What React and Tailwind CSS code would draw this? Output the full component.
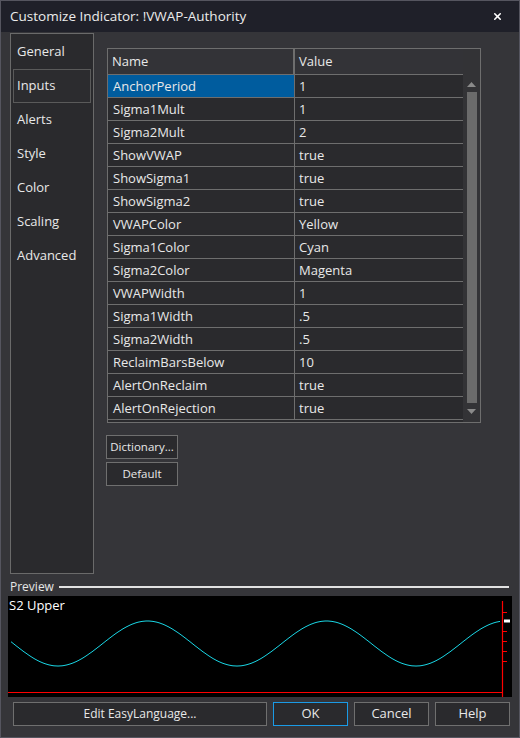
import { X } from "lucide-react";

const rows = [
  ["AnchorPeriod", "1"],
  ["Sigma1Mult", "1"],
  ["Sigma2Mult", "2"],
  ["ShowVWAP", "true"],
  ["ShowSigma1", "true"],
  ["ShowSigma2", "true"],
  ["VWAPColor", "Yellow"],
  ["Sigma1Color", "Cyan"],
  ["Sigma2Color", "Magenta"],
  ["VWAPWidth", "1"],
  ["Sigma1Width", ".5"],
  ["Sigma2Width", ".5"],
  ["ReclaimBarsBelow", "10"],
  ["AlertOnReclaim", "true"],
  ["AlertOnRejection", "true"],
];

const tabs = ["General", "Inputs", "Alerts", "Style", "Color", "Scaling", "Advanced"];

// sine wave for the preview chart, local coords of a 504x101 box
const wave = (() => {
  const pts = [];
  for (let x = 3; x <= 492; x++) {
    const X = x + 8;
    const y = 47.5 + 22.5 * Math.cos((2 * Math.PI * (X - 58)) / 179);
    pts.push(`${x},${y.toFixed(1)}`);
  }
  return pts.join(" ");
})();

const Button = ({ children, className = "" }) => (
  <button
    className={`h-[24px] bg-[#2a2a2d] border border-[#6f6f6f] text-[#e8e8e8] ${className}`}
  >
    {children}
  </button>
);

export default function App() {
  return (
    <div
      className="w-[520px] h-[738px] bg-[#353539] border border-[#55555f] flex flex-col text-[#e8e8e8] overflow-hidden"
      style={{ fontFamily: '"Open Sans", "Noto Sans", sans-serif' }}
    >
      {/* title bar */}
      <div className="h-[31px] shrink-0 bg-[#1f2029] flex items-center justify-between pl-[9px] pr-[16px]">
        <span className="text-[13.5px] text-[#ececec]">Customize Indicator: !VWAP-Authority</span>
        <X size={11} strokeWidth={3.5} className="text-white" />
      </div>

      <div className="flex pl-[9px] pt-[1px]">
        {/* left tabs */}
        <div className="w-[84px] h-[541px] border border-[#6a6a6a] bg-[#2a2a2d] flex flex-col pt-[1px] px-[2px]">
          {tabs.map((t) => (
            <div
              key={t}
              className={`h-[34px] flex items-center pl-[3px] text-[13px] ${
                t === "Inputs" ? "border border-[#5a5a5a] bg-[#2c2c2f]" : "border border-transparent"
              }`}
            >
              {t}
            </div>
          ))}
        </div>

        {/* inputs area */}
        <div className="ml-[13px] pt-[15px]">
          <div className="w-[374px] h-[375px] border border-[#6e6e6e] bg-[#2a2a2d] flex overflow-hidden">
            <div className="w-[355px] flex flex-col text-[13px]">
              <div className="h-[26px] shrink-0 flex bg-[#333337] border-b border-[#6e6e6e]">
                <div className="w-[187px] border-r-2 border-[#6e6e6e] pl-[4px] flex items-center">Name</div>
                <div className="flex-1 pl-[4px] flex items-center">Value</div>
              </div>
              {rows.map(([n, v], i) => (
                <div key={n} className="h-[23px] shrink-0 flex border-b border-[#6e6e6e]">
                  <div
                    className={`w-[187px] border-r border-[#6e6e6e] pl-[5px] flex items-center pt-[2px] ${
                      i === 0 ? "bg-[#005c9e]" : ""
                    }`}
                  >
                    {n}
                  </div>
                  <div className="flex-1 pl-[4px] flex items-center pt-[2px]">{v}</div>
                </div>
              ))}
            </div>
            {/* scrollbar */}
            <div className="w-[17px] bg-[#333336] flex flex-col items-center pt-[27px] pb-[3px]">
              <div className="h-[16px] flex items-center justify-center">
                <svg width="9" height="5" viewBox="0 0 9 5">
                  <path d="M4.5 0 L9 5 L0 5 Z" fill="#8a8a8a" />
                </svg>
              </div>
              <div className="w-[10px] flex-1 bg-[#6b6b6b]" />
              <div className="h-[16px] flex items-center justify-center">
                <svg width="9" height="5" viewBox="0 0 9 5">
                  <path d="M0 0 L9 0 L4.5 5 Z" fill="#8a8a8a" />
                </svg>
              </div>
            </div>
          </div>

          <div className="flex flex-col gap-[3px] mt-[12px] -ml-[1px]">
            <Button className="w-[72px] h-[23px] text-[11.5px]">Dictionary...</Button>
            <Button className="w-[72px] h-[23px] text-[11.5px]">Default</Button>
          </div>
        </div>
      </div>

      {/* preview */}
      <div className="flex items-center pl-[9px] pr-[10px] mt-[6px] h-[13px]">
        <span className="text-[12px] text-[#e6e6e6]">Preview</span>
        <div className="flex-1 ml-[5px] h-[2px] bg-[#e2e2e2]" />
      </div>
      <div className="relative ml-[7px] mt-[3px] w-[504px] h-[101px] bg-black">
        <span className="absolute left-[1px] top-[1px] text-[13px] text-white leading-[16px]">S2 Upper</span>
        <svg width="504" height="101" viewBox="0 0 504 101" className="block">
          <polyline points={wave} fill="none" stroke="#1ad7e6" strokeWidth="1" />
          <line x1="0" y1="96.5" x2="495" y2="96.5" stroke="#ff0000" strokeWidth="1.2" />
          <line x1="494.5" y1="5" x2="494.5" y2="101" stroke="#ff0000" strokeWidth="1.2" />
          {[16, 35, 45, 55, 65].map((y) => (
            <line key={y} x1="494" y1={y + 0.5} x2="499" y2={y + 0.5} stroke="#ff0000" strokeWidth="1" />
          ))}
          <rect x="496" y="23.5" width="6" height="3" fill="#ffffff" />
        </svg>
      </div>

      {/* bottom buttons */}
      <div className="flex pl-[12px] mt-[5px] gap-[6px]">
        <Button className="w-[254px] text-[12px]">Edit EasyLanguage...</Button>
        <Button className="w-[75px] !border-[#1a9be6] text-[13px]">OK</Button>
        <Button className="w-[75px] text-[13px]">Cancel</Button>
        <Button className="w-[75px] text-[13px]">Help</Button>
      </div>
    </div>
  );
}
